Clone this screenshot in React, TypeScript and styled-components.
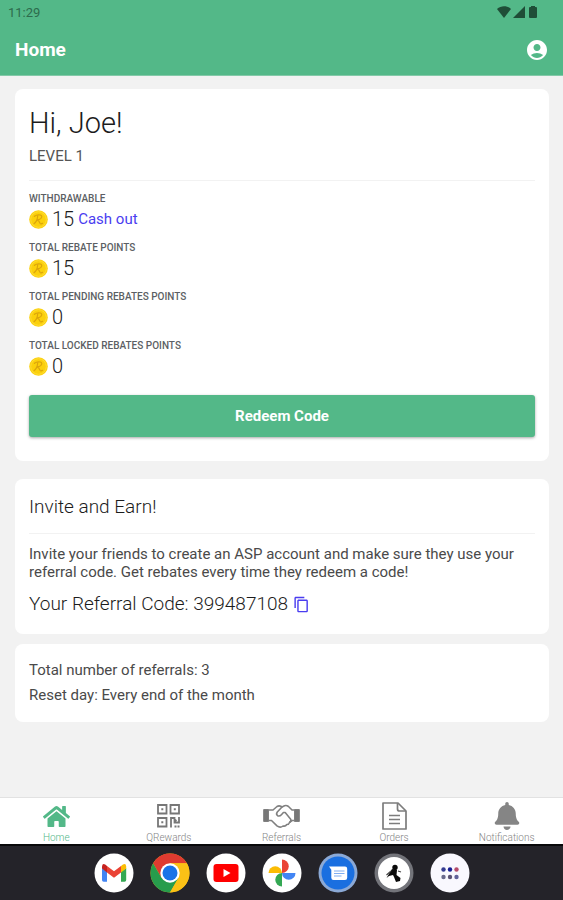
import React from "react";
import styled, { createGlobalStyle } from "styled-components";
import { MdAccountCircle, MdContentCopy } from "react-icons/md";
import { FaBell, FaHome } from "react-icons/fa";

const GREEN = "#53b888";
const BLUE = "#4a3df0";

const GlobalStyle = createGlobalStyle`
  *, *::before, *::after { box-sizing: border-box; }
  body { margin: 0; background: #f2f2f2; font-family: Roboto, "Liberation Sans", sans-serif; color: #1c1c1c; }
  h1, h2, p, dl, dt, dd { margin: 0; font-weight: 400; }
  button { font-family: inherit; cursor: pointer; border: 0; padding: 0; background: none; }
  svg { display: block; }
`;

const Screen = styled.div`
  min-height: 100vh;
  display: flex;
  flex-direction: column;
`;

const Header = styled.header`
  background: ${GREEN};
  border-bottom: 1px solid #83c9a8;
`;

const StatusBar = styled.div`
  display: flex;
  justify-content: space-between;
  align-items: center;
  height: 24px;
  padding: 0 25px 0 8px;
  font-size: 13px;
  color: #2d6b4d;
`;

const StatusIcons = styled.div`
  display: flex;
  gap: 2px;
`;

const TitleBar = styled.div`
  display: flex;
  justify-content: space-between;
  align-items: center;
  height: 51px;
  padding: 0 14px 0 15px;
  color: #fff;
`;

const Title = styled.h1`
  && { font-weight: 700; }
  font-size: 19px;
`;

const IconButton = styled.button<{ $color: string }>`
  display: inline-flex;
  color: ${(p) => p.$color};
`;

const Content = styled.main`
  flex: 1;
  padding: 13px 14px 20px 15px;
`;

const Card = styled.section<{ $gap: number }>`
  background: #fff;
  border-radius: 8px;
  padding: 14px;
  margin-bottom: ${(p) => p.$gap}px;
`;

const Greeting = styled.h2`
  && { font-weight: 300; }
  font-size: 29px;
  line-height: 41px;
`;

const Level = styled.p`
  font-size: 15px;
  line-height: 24px;
  color: #555;
`;

const Divider = styled.hr<{ $after: number }>`
  border: 0;
  height: 1px;
  background: #f2f2f2;
  margin: 12px 0 ${(p) => p.$after}px;
`;

const Stat = styled.div`
  height: 49px;
`;

const StatLabel = styled.dt`
  && { font-weight: 500; }
  font-size: 10px;
  line-height: 20px;
  color: #5c5f64;
`;

const StatValue = styled.dd`
  display: flex;
  align-items: center;
  gap: 4px;
  font-size: 20px;
  line-height: 20px;
`;

const Amount = styled.span`
  font-weight: 300;
`;

const CashOut = styled.a`
  color: ${BLUE};
  font-size: 15px;
  text-decoration: none;
`;

const RedeemButton = styled.button`
  && { background: ${GREEN}; }
  display: block;
  width: 100%;
  height: 42px;
  margin: 10px 0;
  border-radius: 3px;
  box-shadow: 0 1px 3px rgba(0, 0, 0, 0.35);
  color: #fff;
  font-size: 15px;
  font-weight: 700;
`;

const CardTitle = styled.h2`
  && { font-weight: 300; }
  font-size: 19px;
  line-height: 28px;
`;

const Body = styled.p`
  font-size: 15px;
  line-height: 18px;
  color: #4a4a4a;
`;

const ReferralCode = styled.p`
  && { font-weight: 300; }
  display: flex;
  align-items: center;
  gap: 5px;
  margin: 10px 0 3px;
  font-size: 19px;
  line-height: 26px;
`;

const Fact = styled.p`
  font-size: 15px;
  line-height: 25px;
  color: #4a4a4a;
`;

const Footer = styled.footer`
  position: sticky;
  bottom: 0;
`;

const Tabs = styled.nav`
  display: flex;
  height: 47px;
  background: #fff;
  border-top: 1px solid #e2e2e2;
`;

const Tab = styled.a<{ $active?: boolean }>`
  flex: 1 1 0;
  display: flex;
  flex-direction: column;
  align-items: center;
  justify-content: flex-end;
  text-decoration: none;
  color: ${(p) => (p.$active ? GREEN : "#858585")};
`;

const TabIcon = styled.span`
  display: flex;
  align-items: center;
  height: 32px;
`;

const TabLabel = styled.span`
  font-size: 10px;
  line-height: 12px;
  font-weight: 300;
`;

const Dock = styled.div`
  display: flex;
  justify-content: center;
  align-items: center;
  gap: 16px;
  height: 56px;
  background: #242329;
  border-top: 2px solid #08080a;
`;

const AppButton = styled.button`
  width: 40px;
  height: 40px;
  border-radius: 50%;
`;

const WifiIcon = () => (
  <svg width="14" height="12" viewBox="0 0 14 12" fill="#1f4d37">
    <path d="M0 3C4-.7 10-.7 14 3L7 12Z" />
  </svg>
);

const SignalIcon = () => (
  <svg width="13" height="12" viewBox="0 0 13 12" fill="#1f4d37">
    <path d="M12 0V12H0Z" />
  </svg>
);

const BatteryIcon = () => (
  <svg width="10" height="12" viewBox="0 0 10 12" fill="#1f4d37">
    <path d="M3 0h4v1h1q1 0 1 1v9q0 1-1 1H2q-1 0-1-1V2q0-1 1-1h1z" />
  </svg>
);

const Coin = () => (
  <svg width="19" height="19" viewBox="0 0 19 19" fill="none">
    <circle cx="9.5" cy="9.5" r="9.3" fill="#fbd00b" />
    <circle cx="9.5" cy="9.5" r="7.8" stroke="#ffdc36" strokeWidth="1" />
    <path
      d="M8.7 5.2Q8.6 11 5 13.7M5.4 6.3Q8 4.2 11.5 5q2.3 1.2.4 3.3-1.5 1.5-3.9 1.4 2.2 1 3 3.5.8 1.3 2.6.1"
      stroke="#dba50c"
      strokeWidth="1.2"
      strokeLinecap="round"
    />
  </svg>
);

const QrIcon = () => (
  <svg width="23" height="24" viewBox="0 0 23 24" fill="none" stroke="#777" strokeWidth="1.8">
    <path d="M1 1h8.500v8.500H1zM13.500 1H22v8.500h-8.500zM1 14h8.500v8.500H1z" />
    <path d="M4.300 5.200h2M16.800 5.200h2M4.300 18.200h2" strokeWidth="2" />
    <path d="M14 23.500V14h3.500v4.500h4.500V13M17 15l2.500 2M17.500 22.500h2M20.500 22.500h2" />
  </svg>
);

const HandshakeIcon = () => (
  <svg width="37" height="25" viewBox="0 0 37 25" fill="none" stroke="#808080" strokeWidth="1.6" strokeLinejoin="round" strokeLinecap="round">
    <path d="M1 5.500h4.500v12H1zM36 5.500h-4.500v12H36z" fill="#777" strokeWidth="1" />
    <path d="M6 6h4l4-3.500q2-1.200 4.300 0L19 3l2.500-1.200q2-.7 4 .7L29 6h2" />
    <path d="M6 16.500h2.500l5.500 5.300q3.200 2.500 6 .2 2.400.7 3.800-1.500 2.200 0 2.800-2.100L29 16.500h2" />
    <path d="m19 3-4.700 5q-1.600 2.300.3 3.700 2 1 3.800-1l2-2.200h1.800l5.300 6.400q1.300 2-.9 3.500" />
  </svg>
);

const OrdersIcon = () => (
  <svg width="25" height="28" viewBox="0 0 25 28" fill="none" stroke="#7c7c7c" strokeWidth="1.700" strokeLinejoin="round">
    <path d="M1 1h15l8 8v18H1z" />
    <path d="M15.500 1v6q0 2 2 2H24" />
    <path d="M7 13.500h11M7 17.500h11M7 21.500h11" />
  </svg>
);

const GmailLogo = () => (
  <svg viewBox="0 0 40 40">
    <circle cx="20" cy="20" r="19.500" fill="#fff" />
    <path d="M8 15v12q0 1.700 1.700 1.700H13V18.500z" fill="#4285f4" />
    <path d="M27 18.500v10.200h3.500q1.700 0 1.700-1.700V15z" fill="#34a853" />
    <path d="M27 13v6.500l5.200-4v-2q-.3-3.700-3.600-1.700z" fill="#fbbc04" />
    <path d="M13 13v6.500l7 5.300 7-5.300V13l-7 5.300z" fill="#ea4335" />
    <path d="M8 15.500V13.500q.4-3.700 3.500-1.700L13 13v6.500z" fill="#c5221f" />
  </svg>
);

const ChromeLogo = () => (
  <svg viewBox="0 0 40 40">
    <circle cx="20" cy="20" r="19.500" fill="#fbc116" />
    <path d="M3.100 10.300A19.500 19.500 0 0 1 36.900 10.300H20L11.600 24.900z" fill="#df3b30" />
    <path d="M3.100 10.300A19.500 19.500 0 0 0 20 39.500L28.400 24.900 11.600 24.900z" fill="#279c4c" />
    <path d="M20 10.300H36.900A19.500 19.500 0 0 1 20 39.500L28.400 24.900z" fill="#fbc116" />
    <circle cx="20" cy="20" r="9.700" fill="#fff" />
    <circle cx="20" cy="20" r="7.500" fill="#1a73e8" />
  </svg>
);

const YoutubeLogo = () => (
  <svg viewBox="0 0 40 40">
    <circle cx="20" cy="20" r="19.500" fill="#fff" />
    <rect x="7.500" y="11" width="25" height="18" rx="3" fill="#f00" />
    <path d="m17.500 16 7 4-7 4z" fill="#fff" />
  </svg>
);

const PhotosLogo = () => (
  <svg viewBox="0 0 40 40">
    <circle cx="20" cy="20" r="19.500" fill="#fff" />
    <path d="M20 20V6.500a6.700 6.700 0 0 1 0 13.500z" fill="#ea4335" />
    <path d="M20 20h13.500a6.700 6.700 0 0 1-13.500 0z" fill="#4285f4" />
    <path d="M20 20v13.500a6.700 6.700 0 0 1 0-13.500z" fill="#34a853" />
    <path d="M20 20H6.500a6.700 6.700 0 0 1 13.500 0z" fill="#fbbc04" />
  </svg>
);

const MessagesLogo = () => (
  <svg viewBox="0 0 40 40">
    <circle cx="20" cy="20" r="19.500" fill="#8ba9d6" />
    <circle cx="20" cy="20" r="16.500" fill="#1a6fe0" />
    <path d="M11 13.500h16q2.200 0 2.200 2.200v9q0 2.200-2.200 2.200H15.500q-2.200 0-2.200-2.200v-8z" fill="#fff" />
    <path d="M16 18h10.500M16 20.500h10.500M16 23h7.500" stroke="#80aef1" strokeWidth="1.200" />
  </svg>
);

const RunnerLogo = () => (
  <svg viewBox="0 0 40 40">
    <circle cx="20" cy="20" r="19.500" fill="#73747a" />
    <circle cx="20" cy="20" r="16" fill="#fff" />
    <circle cx="21" cy="14.500" r="2.700" fill="#090909" />
    <path d="m18 16 5 1-.5 5 4 3-.5 3-4 1-2-5-1-2-4 1-2.500 2 3-5z" fill="#090909" />
    <path d="m17 18-4.500 4M24 18l3 1" stroke="#444" strokeWidth="1.200" />
  </svg>
);

const AllAppsLogo = () => (
  <svg viewBox="0 0 40 40">
    <circle cx="20" cy="20" r="19.500" fill="#f9f8fe" />
    <circle cx="13.500" cy="16.500" r="2.200" fill="#343b91" />
    <circle cx="20" cy="16.500" r="2.200" fill="#171e94" />
    <circle cx="26.500" cy="16.500" r="2.200" fill="#b54b6b" />
    <circle cx="13.500" cy="24" r="2.200" fill="#696a8c" />
    <circle cx="20" cy="24" r="2.200" fill="#5c5375" />
    <circle cx="26.500" cy="24" r="2.200" fill="#62629a" />
  </svg>
);

const stats = [
  { label: "WITHDRAWABLE", value: 15, cashOut: true },
  { label: "TOTAL REBATE POINTS", value: 15 },
  { label: "TOTAL PENDING REBATES POINTS", value: 0 },
  { label: "TOTAL LOCKED REBATES POINTS", value: 0 },
];

const tabs = [
  { label: "Home", icon: <FaHome size={27} />, active: true },
  { label: "QRewards", icon: <QrIcon /> },
  { label: "Referrals", icon: <HandshakeIcon /> },
  { label: "Orders", icon: <OrdersIcon /> },
  { label: "Notifications", icon: <FaBell size={28} /> },
];

const apps = [
  { name: "Gmail", Logo: GmailLogo },
  { name: "Chrome", Logo: ChromeLogo },
  { name: "YouTube", Logo: YoutubeLogo },
  { name: "Photos", Logo: PhotosLogo },
  { name: "Messages", Logo: MessagesLogo },
  { name: "Runner", Logo: RunnerLogo },
  { name: "All apps", Logo: AllAppsLogo },
];

export default function App() {
  return (
    <Screen>
      <GlobalStyle />
      <Header>
        <StatusBar>
          <span>11:29</span>
          <StatusIcons>
            <WifiIcon />
            <SignalIcon />
            <BatteryIcon />
          </StatusIcons>
        </StatusBar>
        <TitleBar>
          <Title>Home</Title>
          <IconButton $color="#fff" aria-label="Account">
            <MdAccountCircle size={24} />
          </IconButton>
        </TitleBar>
      </Header>

      <Content>
        <Card $gap={18}>
          <Greeting>Hi, Joe!</Greeting>
          <Level>LEVEL 1</Level>
          <Divider $after={8} />
          <dl>
            {stats.map((s) => (
              <Stat key={s.label}>
                <StatLabel>{s.label}</StatLabel>
                <StatValue>
                  <Coin />
                  <Amount>{s.value}</Amount>
                  {s.cashOut && <CashOut href="#cash-out">Cash out</CashOut>}
                </StatValue>
              </Stat>
            ))}
          </dl>
          <RedeemButton>Redeem Code</RedeemButton>
        </Card>

        <Card $gap={10}>
          <CardTitle>Invite and Earn!</CardTitle>
          <Divider $after={11} />
          <Body>
            Invite your friends to create an ASP account and make sure they use your referral code. Get
            rebates every time they redeem a code!
          </Body>
          <ReferralCode>
            Your Referral Code: 399487108
            <IconButton $color={BLUE} aria-label="Copy referral code">
              <MdContentCopy size={17} />
            </IconButton>
          </ReferralCode>
        </Card>

        <Card $gap={0}>
          <Fact>Total number of referrals: 3</Fact>
          <Fact>Reset day: Every end of the month</Fact>
        </Card>
      </Content>

      <Footer>
        <Tabs>
          {tabs.map((t) => (
            <Tab key={t.label} href={"#" + t.label.toLowerCase()} $active={t.active}>
              <TabIcon>{t.icon}</TabIcon>
              <TabLabel>{t.label}</TabLabel>
            </Tab>
          ))}
        </Tabs>
        <Dock>
          {apps.map(({ name, Logo }) => (
            <AppButton key={name} aria-label={name}>
              <Logo />
            </AppButton>
          ))}
        </Dock>
      </Footer>
    </Screen>
  );
}
